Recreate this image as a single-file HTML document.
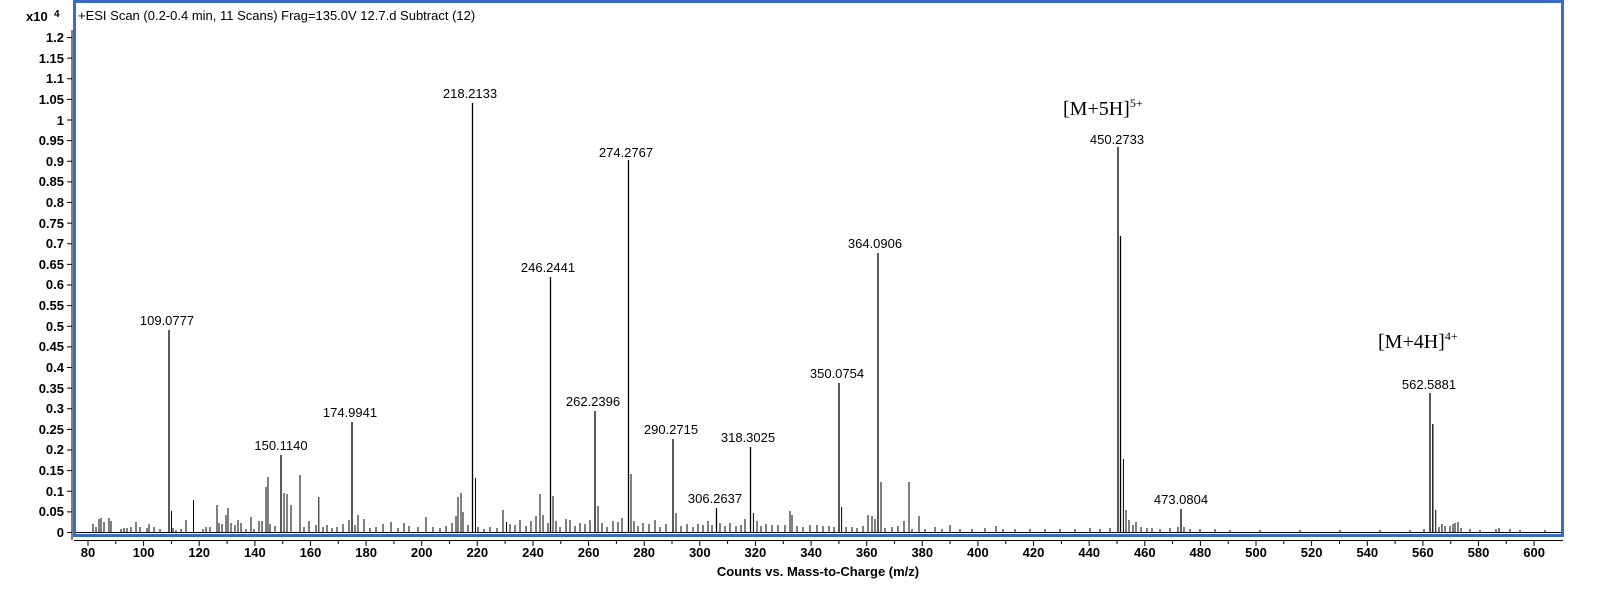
<!DOCTYPE html>
<html><head><meta charset="utf-8"><style>
html,body{margin:0;padding:0;background:#fff;width:1617px;height:599px;overflow:hidden}
svg{display:block}
text{font-family:"Liberation Sans",Arial,sans-serif}
.yl{font-size:13px;font-weight:bold;text-anchor:end}
.xl{font-size:13px;font-weight:bold;text-anchor:middle}
.pl{font-size:13px;text-anchor:middle}
.an{font-family:"Liberation Serif",serif;font-size:20px}
</style></head><body>
<svg width="1617" height="599" viewBox="0 0 1617 599">
<!-- frame -->
<rect x="74.5" y="1.5" width="1488" height="534" fill="none" stroke="#3a6cc6" stroke-width="3"/>
<text x="78" y="20" font-size="13">+ESI Scan (0.2-0.4 min, 11 Scans) Frag=135.0V 12.7.d  Subtract (12)</text>
<!-- y axis -->
<line x1="72" y1="30" x2="72" y2="540" stroke="#000" stroke-width="1"/>
<text x="26" y="21" font-size="13" font-weight="bold">x10</text><text x="54" y="17" font-size="10" font-weight="bold">4</text>
<g stroke="#000" stroke-width="1">
<path d="M67 37.5H72M67 58.1H72M67 78.7H72M67 99.4H72M67 120H72M67 140.6H72M67 161.2H72M67 181.9H72M67 202.5H72M67 223.1H72M67 243.8H72M67 264.4H72M67 285H72M67 305.6H72M67 326.2H72M67 346.9H72M67 367.5H72M67 388.1H72M67 408.8H72M67 429.4H72M67 450H72M67 470.6H72M67 491.2H72M67 511.9H72M67 532.5H72"/>
</g>
<g class="yl">
<text x="64" y="42">1.2</text><text x="64" y="63">1.15</text><text x="64" y="83">1.1</text><text x="64" y="104">1.05</text><text x="64" y="125">1</text><text x="64" y="145">0.95</text><text x="64" y="166">0.9</text><text x="64" y="186">0.85</text><text x="64" y="207">0.8</text><text x="64" y="228">0.75</text><text x="64" y="248">0.7</text><text x="64" y="269">0.65</text><text x="64" y="289">0.6</text><text x="64" y="310">0.55</text><text x="64" y="331">0.5</text><text x="64" y="351">0.45</text><text x="64" y="372">0.4</text><text x="64" y="393">0.35</text><text x="64" y="413">0.3</text><text x="64" y="434">0.25</text><text x="64" y="454">0.2</text><text x="64" y="475">0.15</text><text x="64" y="496">0.1</text><text x="64" y="516">0.05</text><text x="64" y="537">0</text>
</g>
<!-- x axis -->
<line x1="74" y1="540.5" x2="1563" y2="540.5" stroke="#000"/>
<g stroke="#000">
<path d="M88 540V546M115.8 540V544M143.6 540V546M171.4 540V544M199.2 540V546M227.1 540V544M254.9 540V546M282.7 540V544M310.5 540V546M338.3 540V544M366.1 540V546M393.9 540V544M421.7 540V546M449.5 540V544M477.3 540V546M505.2 540V544M533 540V546M560.8 540V544M588.6 540V546M616.4 540V544M644.2 540V546M672 540V544M699.8 540V546M727.6 540V544M755.4 540V546M783.3 540V544M811.1 540V546M838.9 540V544M866.7 540V546M894.5 540V544M922.3 540V546M950.1 540V544M977.9 540V546M1005.7 540V544M1033.5 540V546M1061.4 540V544M1089.2 540V546M1117 540V544M1144.8 540V546M1172.6 540V544M1200.4 540V546M1228.2 540V544M1256 540V546M1283.8 540V544M1311.6 540V546M1339.5 540V544M1367.3 540V546M1395.1 540V544M1422.9 540V546M1450.7 540V544M1478.5 540V546M1506.3 540V544M1534.1 540V546"/>
</g>
<g class="xl">
<text x="88" y="557">80</text><text x="143.6" y="557">100</text><text x="199.2" y="557">120</text><text x="254.9" y="557">140</text><text x="310.5" y="557">160</text><text x="366.1" y="557">180</text><text x="421.7" y="557">200</text><text x="477.3" y="557">220</text><text x="533" y="557">240</text><text x="588.6" y="557">260</text><text x="644.2" y="557">280</text><text x="699.8" y="557">300</text><text x="755.4" y="557">320</text><text x="811.1" y="557">340</text><text x="866.7" y="557">360</text><text x="922.3" y="557">380</text><text x="977.9" y="557">400</text><text x="1033.5" y="557">420</text><text x="1089.2" y="557">440</text><text x="1144.8" y="557">460</text><text x="1200.4" y="557">480</text><text x="1256" y="557">500</text><text x="1311.6" y="557">520</text><text x="1367.3" y="557">540</text><text x="1422.9" y="557">560</text><text x="1478.5" y="557">580</text><text x="1534.1" y="557">600</text>
</g>
<text x="818" y="576" font-size="13" font-weight="bold" text-anchor="middle">Counts vs. Mass-to-Charge (m/z)</text>
<!-- baseline -->
<line x1="76" y1="532.5" x2="1561" y2="532.5" stroke="#000" stroke-width="1"/>
<!-- peaks -->
<g stroke="#000" stroke-width="1.3" fill="none">
<path d="M169 532V330M281 532V455M352 532V422M472.5 532V103M550.5 532V277M595 532V411M628.5 532V160M673 532V439M716.5 532V508M750.5 532V447M839 532V383M878 532V253M1118 532V147M1120.5 532V236M1430 532V393M1432.8 532V424M1181 532V509"/>
</g>
<g stroke="#000" stroke-width="1" fill="none">
<path d="M93 532V524M96 532V527M99 532V519M101 532V518M104 532V522M109 532V518M111 532V521M121 532V529M124 532V528M127 532V528M131 532V527M136 532V522M140 532V527M147 532V528M149 532V524M154 532V527M160 532V529M171.5 532V511M173 532V528M176 532V530M181 532V529M186 532V520M193.5 532V500M203 532V529M206 532V527M210 532V527M217 532V505M219 532V523M222 532V524M226 532V515M228 532V508M231 532V523M235 532V525M238 532V520M241 532V523M246 532V529M251 532V517M254 532V529M259 532V521M262 532V521M266 532V487M268 532V477M270 532V524M275 532V526M284 532V493M287 532V494M291 532V505M300 532V475M304 532V527M309 532V521M316 532V525M318.8 532V497M323 532V527M327 532V525M332 532V528M337 532V527M343 532V524M349 532V520M355 532V525M358 532V515M364 532V519M370 532V528M376 532V527M383 532V524M391 532V522M398 532V528M404 532V523M409 532V526M418 532V527M426 532V517M433 532V527M440 532V528M446 532V526M452 532V523M456 532V516M458 532V497M461 532V493M463 532V512M468 532V525M475.5 532V478M478 532V527M484 532V529M490 532V527M497 532V528M503 532V510M506.5 532V522M510 532V524M515 532V525M520 532V520M526 532V526M531 532V521M536 532V516M540 532V494M543 532V515M548 532V523M553 532V496M556 532V521M560 532V527M566 532V519M570 532V520M575 532V526M580 532V523M585 532V524M590 532V520M598 532V506M602 532V523M607 532V527M613 532V521M618 532V522M622 532V518M631 532V474M634 532V521M638 532V526M643 532V523M649 532V524M655 532V520M660 532V527M666 532V524M676 532V513M681 532V526M687 532V524M693 532V527M698 532V524M703 532V525M708 532V521M712 532V525M720 532V523M725 532V526M730 532V523M736 532V526M741 532V525M745 532V519M753.4 532V513M757 532V521M761 532V526M766 532V524M772 532V525M778 532V525M785 532V525M790 532V511M792 532V515M797 532V526M803 532V527M810 532V525M817 532V525M823 532V526M829 532V526M834 532V527M841.6 532V507M846 532V527M852 532V527M857 532V528M863 532V526M868 532V515M872 532V516M875 532V519M881 532V482M885 532V528M892 532V527M898 532V526M904 532V521M909 532V482M912 532V529M919 532V516M925 532V529M935 532V527M942 532V529M950 532V525M960 532V529M972 532V529M985 532V528M996 532V526M1003 532V529M1015 532V529M1030 532V529M1045 532V529M1060 532V529M1075 532V529M1090 532V528M1100 532V529M1110 532V528M1123.4 532V459M1126 532V510M1129 532V520M1133 532V525M1136 532V522M1141 532V527M1147 532V528M1152 532V528M1160 532V529M1170 532V528M1178 532V527M1184 532V527M1190 532V529M1200 532V529M1215 532V529M1230 532V530M1260 532V530M1300 532V530M1340 532V530M1380 532V530M1410 532V530M1424 532V529M1435.7 532V510M1439 532V527M1442 532V524M1445 532V526M1450 532V526M1453 532V524M1455 532V523M1458 532V522M1461 532V528M1470 532V529M1480 532V530M1496 532V529M1499 532V528M1510 532V529M1520 532V530M1545 532V530"/>
</g>
<g class="pl">
<text x="167" y="325">109.0777</text>
<text x="281" y="450">150.1140</text>
<text x="350" y="417">174.9941</text>
<text x="470" y="98">218.2133</text>
<text x="548" y="272">246.2441</text>
<text x="593" y="406">262.2396</text>
<text x="626" y="157">274.2767</text>
<text x="671" y="434">290.2715</text>
<text x="715" y="503">306.2637</text>
<text x="748" y="442">318.3025</text>
<text x="837" y="378">350.0754</text>
<text x="875" y="248">364.0906</text>
<text x="1117" y="144">450.2733</text>
<text x="1181" y="504">473.0804</text>
<text x="1429" y="389">562.5881</text>
</g>
<text class="an" x="1063" y="115">[M+5H]<tspan font-size="12" dy="-8">5+</tspan></text>
<text class="an" x="1378" y="348">[M+4H]<tspan font-size="12" dy="-8">4+</tspan></text>
</svg>
</body></html>
